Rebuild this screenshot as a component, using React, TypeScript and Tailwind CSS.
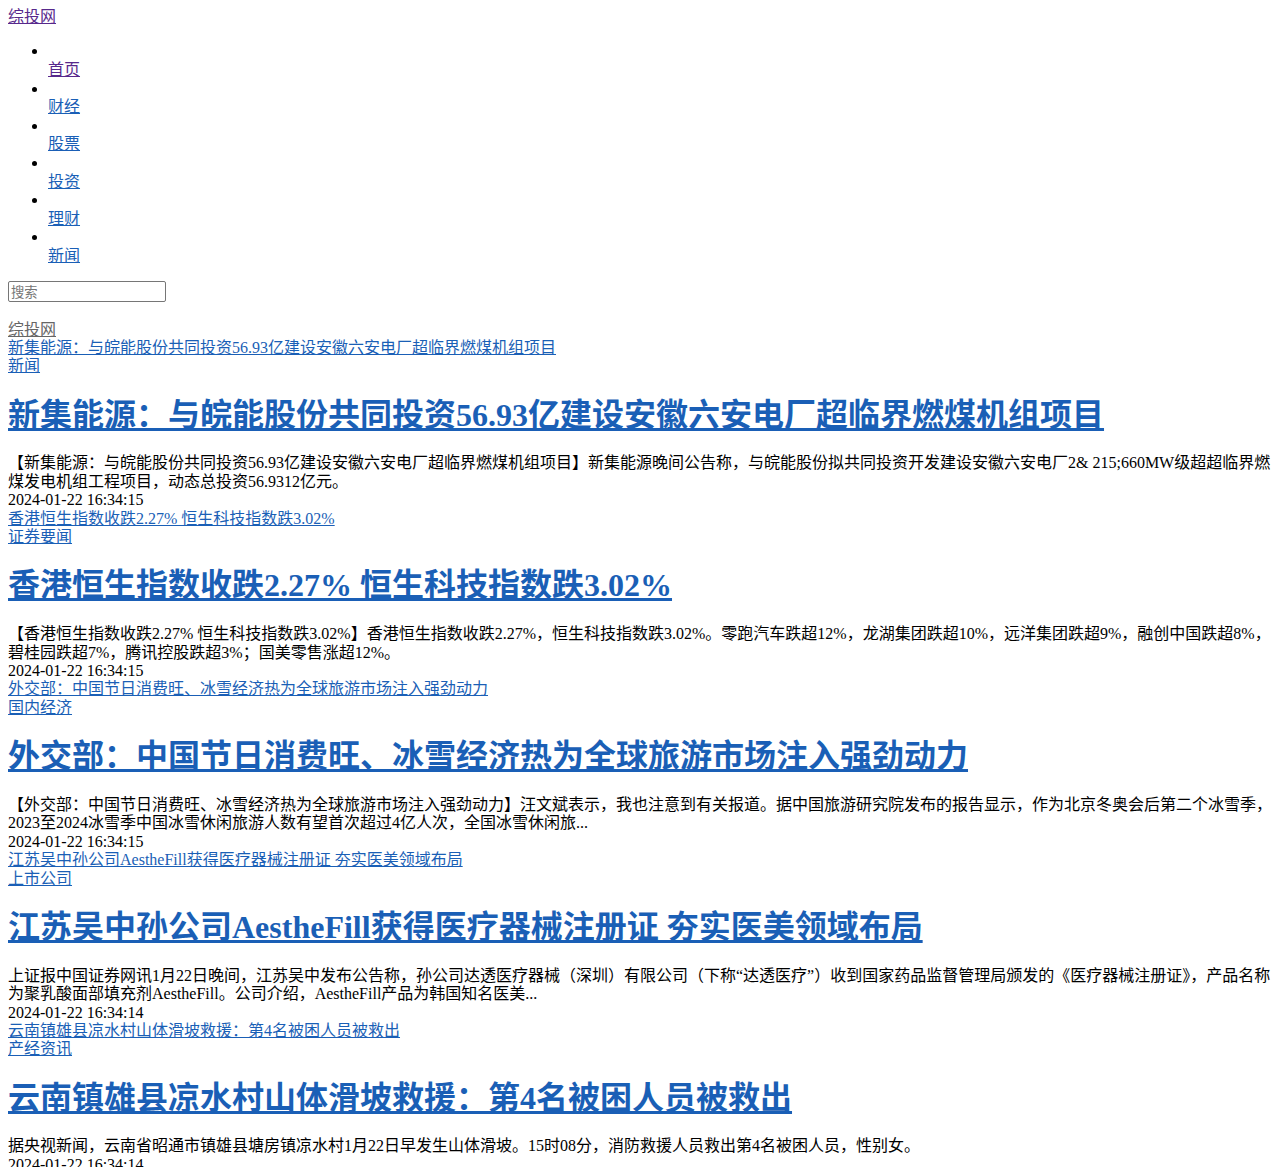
import React from 'react';

const NAV = ['首页', '财经', '股票', '投资', '理财', '新闻'];

const POSTS = [
  {
    title: '新集能源：与皖能股份共同投资56.93亿建设安徽六安电厂超临界燃煤机组项目',
    category: '新闻',
    summary:
      '【新集能源：与皖能股份共同投资56.93亿建设安徽六安电厂超临界燃煤机组项目】新集能源晚间公告称，与皖能股份拟共同投资开发建设安徽六安电厂2& 215;660MW级超超临界燃煤发电机组工程项目，动态总投资56.9312亿元。',
    time: '2024-01-22 16:34:15',
  },
  {
    title: '香港恒生指数收跌2.27% 恒生科技指数跌3.02%',
    category: '证券要闻',
    summary:
      '【香港恒生指数收跌2.27% 恒生科技指数跌3.02%】香港恒生指数收跌2.27%，恒生科技指数跌3.02%。零跑汽车跌超12%，龙湖集团跌超10%，远洋集团跌超9%，融创中国跌超8%，碧桂园跌超7%，腾讯控股跌超3%；国美零售涨超12%。',
    time: '2024-01-22 16:34:15',
  },
  {
    title: '外交部：中国节日消费旺、冰雪经济热为全球旅游市场注入强劲动力',
    category: '国内经济',
    summary:
      '【外交部：中国节日消费旺、冰雪经济热为全球旅游市场注入强劲动力】汪文斌表示，我也注意到有关报道。据中国旅游研究院发布的报告显示，作为北京冬奥会后第二个冰雪季，2023至2024冰雪季中国冰雪休闲旅游人数有望首次超过4亿人次，全国冰雪休闲旅...',
    time: '2024-01-22 16:34:15',
  },
  {
    title: '江苏吴中孙公司AestheFill获得医疗器械注册证 夯实医美领域布局',
    category: '上市公司',
    summary:
      '上证报中国证券网讯1月22日晚间，江苏吴中发布公告称，孙公司达透医疗器械（深圳）有限公司（下称“达透医疗”）收到国家药品监督管理局颁发的《医疗器械注册证》，产品名称为聚乳酸面部填充剂AestheFill。公司介绍，AestheFill产品为韩国知名医美...',
    time: '2024-01-22 16:34:14',
  },
  {
    title: '云南镇雄县凉水村山体滑坡救援：第4名被困人员被救出',
    category: '产经资讯',
    summary:
      '据央视新闻，云南省昭通市镇雄县塘房镇凉水村1月22日早发生山体滑坡。15时08分，消防救援人员救出第4名被困人员，性别女。',
    time: '2024-01-22 16:34:14',
  },
];

const link = 'text-[#1a5fb6] underline';

export default function App() {
  return (
    <div className="p-2 bg-white text-black text-[16px] leading-[1.15] font-['Liberation_Serif','Noto_Sans_CJK_SC',serif]">
      {/* header */}
      <div>
        <a href="#" className="text-[#57288c] underline">综投网</a>
      </div>
      <ul className="list-disc pl-10 my-4 leading-[18.6px]">
        {NAV.map((item, i) => (
          <li key={item}>
            <br />
            <a href="#" className={i === 0 ? 'text-[#57288c] underline' : link}>
              {item}
            </a>
          </li>
        ))}
      </ul>
      <div className="mb-[17px] h-[21px] mt-[-1px]">
        <input
          type="text"
          placeholder="搜索"
          className="w-[158px] h-[21px] border border-[#767676] rounded-[2px] px-[2px] text-[13.33px] placeholder:text-[#757575] font-['Noto_Sans_CJK_SC',sans-serif]"
        />
      </div>

      {/* list */}
      <div className="pt-[2px]">
        <a href="#" className="text-[#666] underline">综投网</a>
      </div>
      {POSTS.map((post) => (
        <div key={post.title}>
          <div>
            <a href="#" className={link}>{post.title}</a>
          </div>
          <div>
            <a href="#" className={link}>{post.category}</a>
          </div>
          <h1 className="text-[32px] font-bold my-[21px]">
            <a href="#" className={link}>{post.title}</a>
          </h1>
          <div>{post.summary}</div>
          <div>{post.time}</div>
        </div>
      ))}
    </div>
  );
}
